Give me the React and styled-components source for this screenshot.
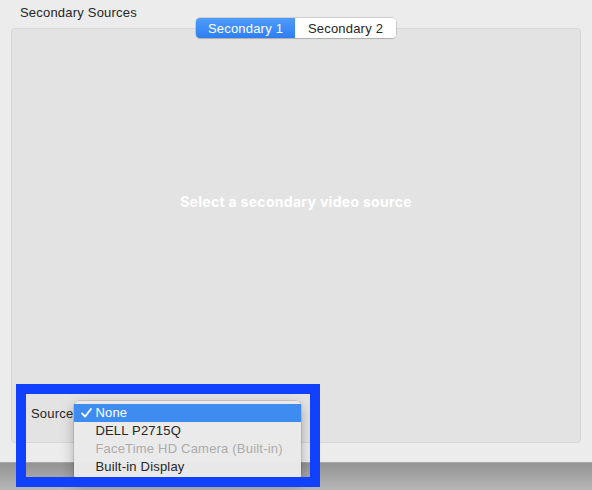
import React from "react";
import styled, { createGlobalStyle } from "styled-components";

const GlobalStyle = createGlobalStyle`
  html, body { margin: 0; padding: 0; }
  body {
    font-family: "Liberation Sans", Arial, sans-serif;
    -webkit-font-smoothing: antialiased;
  }
`;

const Page = styled.div`
  position: relative;
  width: 592px;
  height: 490px;
  display: flex;
  flex-direction: column;
  overflow: hidden;
`;

const Window = styled.div`
  height: 463px;
  background: #ececec;
  padding: 0 11px;
  box-sizing: border-box;
  display: flex;
  flex-direction: column;
  border-bottom: 1px solid #a8a8a8;
`;

const Title = styled.div`
  height: 28px;
  padding: 5px 0 0 9px;
  box-sizing: border-box;
  font-size: 13px;
  line-height: 16px;
  color: #262626;
  letter-spacing: 0.2px;
`;

const Panel = styled.div`
  position: relative;
  height: 415px;
  background: #e3e3e3;
  border: 1px solid #d7d7d7;
  border-radius: 4px;
  box-sizing: border-box;
  display: flex;
  flex-direction: column;
`;

const Segmented = styled.div`
  align-self: center;
  margin-top: -11px;
  display: flex;
  height: 20px;
  border-radius: 4px;
  background: #fff;
  box-shadow: 0 0 0 0.5px rgba(0, 0, 0, 0.25), 0 1px 1px rgba(0, 0, 0, 0.12);
  overflow: hidden;
`;

const Segment = styled.div`
  width: ${(p) => p.$w}px;
  display: flex;
  align-items: center;
  justify-content: center;
  font-size: 13px;
  letter-spacing: 0.2px;
  color: ${(p) => (p.$active ? "#fff" : "#262626")};
  background: ${(p) =>
    p.$active ? "linear-gradient(#4f9cfa, #2f7ef2)" : "#ffffff"};
`;

const Message = styled.div`
  height: 327px;
  display: flex;
  align-items: center;
  justify-content: center;
  font-family: Inter, "Liberation Sans", sans-serif;
  font-size: 14px;
  font-weight: bold;
  letter-spacing: 0.3px;
  color: #ffffff;
`;

const Footer = styled.div`
  flex: 1;
  display: flex;
  align-items: flex-start;
  padding: 41px 0 0 19px;
`;

const Label = styled.div`
  font-size: 13px;
  line-height: 16px;
  color: #262626;
  letter-spacing: 0.2px;
`;

const MenuAnchor = styled.div`
  position: relative;
  width: 0;
  height: 16px;
`;

const Menu = styled.div`
  position: absolute;
  left: 1px;
  top: -5px;
  width: 227px;
  padding: 3px 0 4px;
  background: rgba(234, 234, 234, 0.98);
  border-radius: 5px;
  box-shadow: 0 0 0 0.5px rgba(0, 0, 0, 0.2), 0 5px 14px rgba(0, 0, 0, 0.28);
  z-index: 2;
`;

const Item = styled.div`
  position: relative;
  height: 18px;
  line-height: 18px;
  padding-left: 21px;
  font-size: 13px;
  letter-spacing: 0.2px;
  color: ${(p) => (p.$selected ? "#fff" : p.$disabled ? "#acacac" : "#262626")};
  background: ${(p) => (p.$selected ? "#3f8cf0" : "transparent")};
`;

const Check = styled.svg`
  position: absolute;
  left: 7px;
  top: 4px;
`;

const Desktop = styled.div`
  flex: 1;
  background: linear-gradient(#939393, #b6b6b6);
`;

const Highlight = styled.div`
  position: absolute;
  left: 16px;
  top: 384px;
  width: 304px;
  height: 103px;
  border: 10px solid #1140ff;
  box-sizing: border-box;
  z-index: 3;
  pointer-events: none;
`;

const items = [
  { label: "None", selected: true },
  { label: "DELL P2715Q" },
  { label: "FaceTime HD Camera (Built-in)", disabled: true },
  { label: "Built-in Display" },
];

export default function App() {
  return (
    <Page>
      <GlobalStyle />
      <Window>
        <Title>Secondary Sources</Title>
        <Panel>
          <Segmented>
            <Segment $active $w={99}>Secondary 1</Segment>
            <Segment $w={101}>Secondary 2</Segment>
          </Segmented>
          <Message>Select a secondary video source</Message>
          <Footer>
            <Label>Source</Label>
            <MenuAnchor>
              <Menu>
                {items.map((it) => (
                  <Item
                    key={it.label}
                    $selected={it.selected}
                    $disabled={it.disabled}
                  >
                    {it.selected && (
                      <Check width="11" height="10" viewBox="0 0 11 10">
                        <path
                          d="M1 5.4 L4 8.6 L10 1"
                          fill="none"
                          stroke="#fff"
                          strokeWidth="1.7"
                          strokeLinecap="round"
                          strokeLinejoin="round"
                        />
                      </Check>
                    )}
                    {it.label}
                  </Item>
                ))}
              </Menu>
            </MenuAnchor>
          </Footer>
        </Panel>
      </Window>
      <Desktop />
      <Highlight />
    </Page>
  );
}
